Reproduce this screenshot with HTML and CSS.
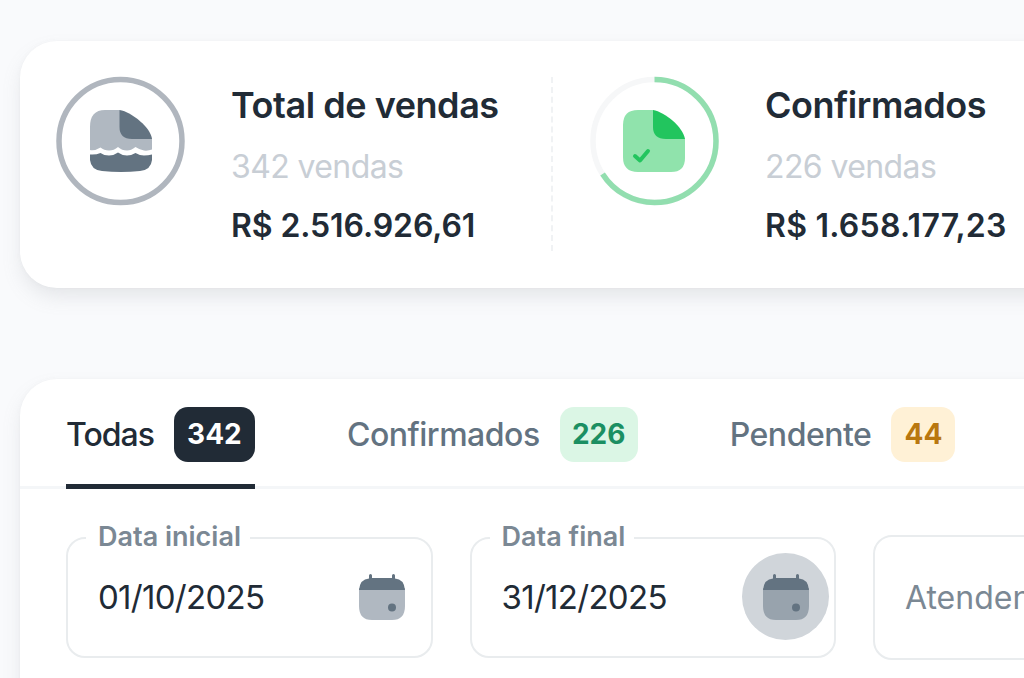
FILE: index.html
```html
<!DOCTYPE html>
<html lang="pt-BR">
<head>
    <meta charset="UTF-8">
    <meta name="viewport" content="width=device-width, initial-scale=1.0">
    <title>Vendas</title>
    <link rel="stylesheet" href="styles.css">
</head>
<body>
    <section class="card summary">
        <div class="summary-item">
            <svg class="ring" viewBox="0 0 128 128">
                <circle class="ring-total" cx="63.500" cy="64" r="61.5"/>
                <path class="gray-light" d="M48 33H62.500L95 62V72.500Q91 74 87 73.500Q83 73 78.500 70Q74 73.500 70 73.500Q65 73.500 61 70Q57 73.500 52 73.500Q47 73.500 43.500 70.500Q38 74 33 73V50Q33 33 48 33Z"/>
                <path class="gray-dark" d="M62.500 33C75 35 94 51 95 62H75Q62.500 62 62.500 50Z"/>
                <path class="gray-dark" d="M33 77.500Q39 78 43.500 76Q47 78.500 52 78.500Q57 78.500 61 75.500Q65 78.500 70 78.500Q74 78.500 78.500 76Q83 78.500 87 78.500Q91 78.500 95 77.500V83Q94 93 83 94Q64 96 45 94Q34 93 33 83Z"/>
            </svg>
            <div class="summary-text">
                <h2>Total de vendas</h2>
                <p class="count">342 vendas</p>
                <p class="amount amount-total">R$ 2.516.926,61</p>
            </div>
        </div>
        <div class="divider"></div>
        <div class="summary-item">
            <svg class="ring" viewBox="0 0 128 128">
                <circle class="ring-track" cx="63.500" cy="64" r="61.5"/>
                <circle class="ring-value" cx="63.500" cy="64" r="61.5" pathLength="100" stroke-dasharray="66 100" transform="rotate(-90 63.500 64)"/>
                <path class="green-light" d="M47 33H62L94 62V81Q94 95 80 95H47Q32 95 32 80V48Q32 33 47 33Z"/>
                <path class="green-dark" d="M62 33C74 35 92 50 94 62H75Q62 62 62 50Z"/>
                <path class="check" d="M44 79L49 83.500L57 74"/>
            </svg>
            <div class="summary-text">
                <h2>Confirmados</h2>
                <p class="count">226 vendas</p>
                <p class="amount amount-confirmed">R$ 1.658.177,23</p>
            </div>
        </div>
    </section>

    <section class="card sales">
        <nav class="tabs">
            <a class="tab active"><span>Todas</span><b class="badge dark">342</b></a>
            <a class="tab"><span>Confirmados</span><b class="badge green">226</b></a>
            <a class="tab"><span>Pendente</span><b class="badge yellow">44</b></a>
        </nav>
        <div class="filters">
            <div class="field">
                <label>Data inicial</label>
                <span class="date">01/10/2025</span>
                <span class="icon-button">
                    <svg width="48" height="48" viewBox="0 0 48 48">
                        <path class="gray-light" d="M1 15H47V33Q47 47 34 47H14Q1 47 1 33Z"/>
                        <path class="gray-dark" d="M1 17Q2 6 11 5.500V2.500Q11 1 12.500 1T14 2.500V5H34V2.500Q34 1 35.500 1T37 2.500V5.500Q46 6 47 17Z"/>
                        <circle class="gray-dark" cx="34" cy="34.500" r="4"/>
                    </svg>
                </span>
            </div>
            <div class="field">
                <label>Data final</label>
                <span class="date">31/12/2025</span>
                <span class="icon-button hover">
                    <svg width="48" height="48" viewBox="0 0 48 48">
                        <path class="gray-light" d="M1 15H47V33Q47 47 34 47H14Q1 47 1 33Z"/>
                        <path class="gray-dark" d="M1 17Q2 6 11 5.500V2.500Q11 1 12.500 1T14 2.500V5H34V2.500Q34 1 35.500 1T37 2.500V5.500Q46 6 47 17Z"/>
                        <circle class="gray-dark" cx="34" cy="34.500" r="4"/>
                    </svg>
                </span>
            </div>
            <div class="field select">
                <span class="placeholder">Atendente</span>
            </div>
        </div>
    </section>
</body>
</html>
```

FILE: styles.css
```css
* {
    box-sizing: border-box;
}
body {
    margin: 0;
    padding: 41px 0 0 20px;
    height: 678px;
    overflow: hidden;
    background: #f9fafc;
    color: #212b36;
    font-family: Inter, sans-serif;
}
h2,
p {
    margin: 0;
    white-space: nowrap;
}
.card {
    width: 1400px;
    background: #fff;
    border-radius: 37px;
    box-shadow: 0 0 4px rgba(150, 158, 160, 0.06), 0 10px 20px -2px rgba(140, 146, 148, 0.19);
}
.summary {
    display: flex;
    height: 247px;
    padding: 36px 37px;
}
.summary-item {
    display: flex;
    gap: 46px;
}
.summary-item:first-child {
    width: 494px;
}
.ring {
    width: 128px;
    height: 128px;
    flex-shrink: 0;
    overflow: visible;
}
.ring circle {
    fill: none;
    stroke-width: 5.5;
}
.ring .ring-total {
    stroke: #b0b6be;
}
.ring .ring-track {
    stroke: #f6f7f8;
}
.ring .ring-value {
    stroke: #92deaf;
}
.gray-light {
    fill: #b0b8c1;
}
.gray-dark {
    fill: #637381;
}
.green-light {
    fill: #90e3ac;
}
.green-dark {
    fill: #22c55e;
}
.check {
    fill: none;
    stroke: #22c55e;
    stroke-width: 4;
    stroke-linecap: round;
    stroke-linejoin: round;
}
.summary-text h2 {
    font-size: 36px;
    font-weight: 600;
    line-height: 56px;
    letter-spacing: -0.45px;
}
.count {
    margin-top: 8px;
    font-size: 32px;
    line-height: 52px;
    letter-spacing: -0.6px;
    color: #c8ced5;
}
.amount {
    margin-top: 8px;
    font-size: 32px;
    font-weight: 600;
    line-height: 50px;
}
.amount-total {
    letter-spacing: -0.1px;
}
.amount-confirmed {
    letter-spacing: 0.25px;
}
.divider {
    height: 174px;
    margin: 0 38px 0 0;
    border-left: 2px dashed #f0f2f4;
}
.sales {
    height: 500px;
    margin-top: 91px;
}
.tabs {
    display: flex;
    gap: 92px;
    height: 110px;
    padding: 0 46px;
    box-shadow: inset 0 -3px 0 #f4f6f8;
}
.tab {
    display: flex;
    align-items: center;
    gap: 20px;
    font-size: 32px;
    font-weight: 500;
    letter-spacing: -0.48px;
    color: #637381;
}
.active {
    color: #212b36;
    border-bottom: 5px solid #212b36;
    padding-top: 5px;
    letter-spacing: -1px;
}
.badge {
    display: flex;
    align-items: center;
    justify-content: center;
    height: 55px;
    border-radius: 14px;
    font-size: 28px;
    font-weight: 700;
    letter-spacing: 0;
}
.dark {
    width: 81px;
    background: #212b36;
    color: #fff;
}
.green {
    width: 78px;
    background: #dbf6e5;
    color: #1b8f62;
}
.yellow {
    width: 64px;
    background: #fff1d6;
    color: #b9770f;
}
.filters {
    display: flex;
    align-items: center;
    gap: 37px;
    padding: 46px 46px 0;
}
.field {
    position: relative;
    display: flex;
    align-items: center;
    justify-content: space-between;
    width: 366.5px;
    height: 121px;
    padding: 0 5px 2px 30px;
    border: 2px solid #e9ecee;
    border-radius: 19px;
}
.field label {
    position: absolute;
    top: -19px;
    left: 18px;
    padding: 0 9px 0 12px;
    background: #fff;
    color: #7b8894;
    font-size: 27px;
    font-weight: 600;
    line-height: 34px;
    white-space: nowrap;
}
.date {
    font-size: 33px;
    letter-spacing: -0.7px;
}
.icon-button {
    display: flex;
    align-items: center;
    justify-content: center;
    width: 87px;
    height: 87px;
    border-radius: 50%;
}
.hover {
    background: #d0d5da;
}
.hover .gray-light {
    fill: #98a3ad;
}
.select {
    height: 125px;
    padding-bottom: 0;
}
.placeholder {
    font-size: 32px;
    color: #7b8894;
}
```
